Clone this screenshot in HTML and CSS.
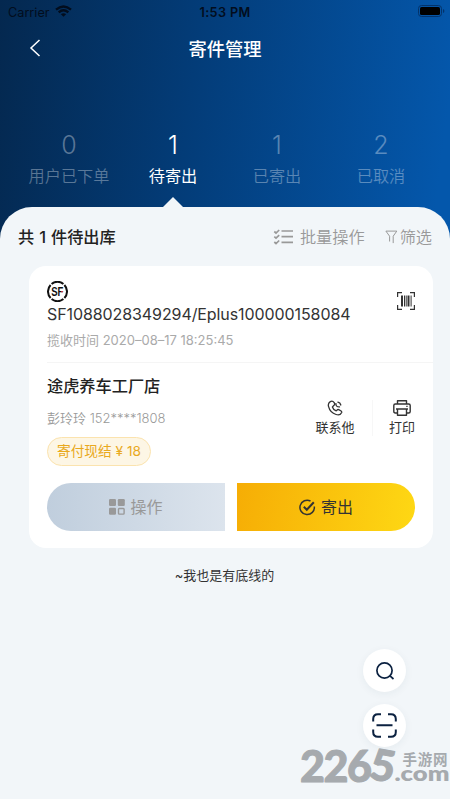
FILE: index.html
```html
<!DOCTYPE html>
<html lang="zh-CN">
<head>
<meta charset="utf-8">
<title>寄件管理</title>
<link rel="stylesheet" href="styles.css">
</head>
<body>
<div class="app">
  <div class="status">
    <div class="carrier"><span>Carrier</span>
      <svg width="17" height="12" viewBox="0 0 17 12" fill="none" stroke="#020d1d" stroke-width="2.4"><path d="M1 4.6Q8.5-1.8 16 4.6M3.7 7.3Q8.5 3.2 13.3 7.3"/><path d="M8.5 11.8 5.9 9.2Q8.5 7.2 11.1 9.2Z" fill="#020d1d" stroke="none"/></svg>
    </div>
    <span class="time">1:53 PM</span>
    <svg class="battery" width="27" height="12" viewBox="0 0 27 12"><rect x=".5" y=".5" width="23" height="11" rx="3" fill="none" stroke="#03336a"/><rect x="2" y="2" width="20" height="8" rx="1.6" fill="#000"/><path d="M25 4v4q1.4-.6 1.4-2T25 4z" fill="#03336a"/></svg>
  </div>
  <header class="nav">
    <svg class="back" width="12" height="18" viewBox="0 0 12 18" fill="none" stroke="#fff" stroke-width="1.5"><path d="M10.500 1 2 9l8.500 8"/></svg>
    <h1>寄件管理</h1>
  </header>
  <nav class="tabs">
    <div class="tab"><b>0</b><span>用户已下单</span></div>
    <div class="tab active"><b>1</b><span>待寄出</span></div>
    <div class="tab"><b>1</b><span>已寄出</span></div>
    <div class="tab"><b>2</b><span>已取消</span></div>
  </nav>
  <main class="sheet">
    <div class="toolbar">
      <h2>共 <i>1</i> 件待出库</h2>
      <div class="batch">
        <svg width="21" height="16" viewBox="0 0 21 16" fill="none" stroke="#999" stroke-width="1.700"><path d="M1.300 2.500 3 4 6.200 1M1.300 7.700 3 9.200l3.200-3M1.300 13 3 14.500l3.200-3M8.500 2h11.500M8.500 7.700H20M8.500 13.400H20"/></svg>
        <span>批量操作</span>
      </div>
      <div class="filter">
        <svg width="13" height="14" viewBox="0 0 13 14" fill="none" stroke="#999" stroke-width="1"><path d="M4.600 11.500V6.200L.9 1.100h10.900L8.200 6.200v6.900"/></svg>
        <span>筛选</span>
      </div>
    </div>
    <section class="card">
      <div class="waybill">
        <div class="ids">
          <svg class="sf" width="21" height="21" viewBox="0 0 21 21"><g fill="none" stroke="#111" stroke-width="2"><path d="M4.600 2.900A9.300 9.300 0 0 1 16.400 2.900M4.600 18.100A9.300 9.300 0 0 0 16.400 18.100M3.600 4A9.400 9.400 0 0 0 3.600 17M17.400 4A9.400 9.400 0 0 1 17.400 17"/></g><text x="4.200" y="14.800" textLength="12.200" lengthAdjust="spacingAndGlyphs">SF</text><path d="M14.200 10.600h1.800" stroke="#d33b4d" stroke-width="1.300"/></svg>
          <p class="number">SF1088028349294/Eplus100000158084</p>
          <p class="pickup">揽收时间 <span>2020–08–17 18:25:45</span></p>
        </div>
        <svg class="barcode" width="18" height="18" viewBox="0 0 18 18" fill="none" stroke="#333"><path stroke-width="1.200" d="M.6 5V.6H5M13 .6h4.400V5M.6 13v4.400H5M13 17.400h4.400V13"/><path stroke-width="2" d="M5 3.500v11M11.500 3.500v11"/><path d="M7.500 3.500v11M9.200 3.500v11M14.100 3.500v11"/></svg>
      </div>
      <div class="recipient">
        <div class="person">
          <h3>途虎养车工厂店</h3>
          <p>彭玲玲 <span>152****1808</span></p>
          <div class="pay">寄付现结 ¥ 18</div>
        </div>
        <div class="contact">
          <svg width="16" height="16" viewBox="0 0 16 16" fill="none" stroke="#333" stroke-width="1.300" stroke-linecap="round" stroke-linejoin="round"><path d="M3.300 1.600Q.7 3.200 1.500 6.400C2.400 10 5.300 13.400 9.100 14.500 11.700 15.300 13.800 14.500 14.700 12.500Q14.900 11.600 14.100 11L11.700 9.600Q10.800 9.200 10.100 10L9.200 10.900Q6.200 9.700 5.400 7L6.400 5.900Q8.400 4.600 7.200 2.600 5.500.2 3.300 1.600ZM9 3.600Q8.600 7 12.500 6.900M10.900 2.200Q13.200 2.700 13.800 5"/></svg>
          <span>联系他</span>
        </div>
        <div class="print">
          <svg width="18" height="16" viewBox="0 0 18 16" fill="none" stroke="#333" stroke-width="1.400" stroke-linejoin="round"><path d="M4.500 4V.8h9V4M4.500 13H2.300Q.8 13 .8 11.500v-6Q.8 4 2.300 4h13.400q1.500 0 1.500 1.500v6q0 1.500-1.500 1.500h-2.200"/><path d="M4.500 9h9v6.200h-9zM3 9h12M13.300 6.400h1.300"/></svg>
          <span>打印</span>
        </div>
      </div>
      <div class="actions">
        <button class="btn muted">
          <svg width="16" height="16" viewBox="0 0 16 16" fill="#999"><rect width="7" height="7" rx="1.200"/><rect x="8.800" width="7" height="7" rx="1.200"/><rect y="8.800" width="7" height="7" rx="1.200"/><rect x="9.500" y="9.500" width="5.600" height="5.600" rx=".8" fill="none" stroke="#999" stroke-width="1.400"/></svg>
          <span>操作</span>
        </button>
        <button class="btn send">
          <svg width="17" height="17" viewBox="0 0 17 17" fill="none" stroke="#333"><path stroke-width="1.500" d="M15.300 7.500A7.200 7.200 0 1 1 11.500 2"/><path stroke-width="2" d="m4.800 7.800 3 3 7-7.500"/></svg>
          <span>寄出</span>
        </button>
      </div>
    </section>
    <p class="end">~我也是有底线的</p>
  </main>
  <div class="fab search">
    <svg width="20" height="20" viewBox="0 0 20 20" fill="none" stroke="#0b2140" stroke-width="1.700"><circle cx="9.500" cy="9.500" r="7.600"/><path d="m14.700 14.700 3.800 3.300"/></svg>
  </div>
  <div class="fab scan">
    <svg width="25" height="25" viewBox="0 0 25 25" fill="none" stroke="#0b2140" stroke-width="2"><path d="M1.200 8.500V6q0-4.800 4.800-4.800h3M16 1.200h3q4.800 0 4.800 4.800v2.500M1.200 16.500V19q0 4.800 4.800 4.800h3M16 23.800h3q4.800 0 4.800-4.800v-2.500M4.500 12.300h16"/></svg>
  </div>
  <svg class="mark" width="150" height="50" viewBox="0 0 150 50" fill="#a6aaae"><text class="mark-num" x="0 23.500 47 68" y="36.500 36.500 36.500 33.500" rotate="0 0 0 10">2265</text><text class="mark-cn" x="102.500" y="19.500" textLength="45">手游网</text><text class="mark-com" x="94.500" y="36" textLength="55" lengthAdjust="spacingAndGlyphs">.com</text></svg>
</div>
</body>
</html>
```
FILE: styles.css
```css
* { box-sizing: border-box; margin: 0; padding: 0; }
body { font-family: Inter, "Noto Sans CJK SC", sans-serif; color: #333; }
svg { display: block; flex: none; }
.app { position: relative; width: 450px; height: 799px; overflow: hidden; display: flex; flex-direction: column; background: linear-gradient(97deg, #04284f 0, #033c78 42%, #0457ab 96%) 0 0 / 450px 250px no-repeat #f2f6f9; }

.status { height: 24px; display: grid; grid-template-columns: 1fr auto 1fr; align-items: center; padding: 0 5px 0 8px; color: #020d1d; font-size: 12.7px; }
.carrier { display: flex; align-items: center; gap: 5px; }
.carrier svg { margin-top: -2px; }
.time { font-weight: 600; letter-spacing: .35px; margin-right: 3px; }
.battery { justify-self: end; margin-top: -2px; }

.nav { height: 48px; display: grid; grid-template-columns: 1fr auto 1fr; align-items: center; padding: 0 28px; color: #fff; }
.back { margin-left: 1px; }
.nav h1 { grid-column: 2; font-size: 18.3px; line-height: 24px; font-weight: 500; margin-top: 2px; }

.tabs { height: 135px; padding: 57px 17px 0; display: grid; grid-template-columns: repeat(4, 104px); color: #fff; text-align: center; }
.tab { position: relative; display: flex; flex-direction: column; color: rgba(255, 255, 255, .34); }
.tab b { font: 300 25px/32px Inter, sans-serif; }
.tab span { font-size: 16.2px; line-height: 24px; margin-top: 3px; font-weight: 350; }
.tab.active { color: #fff; }
.tab.active span { font-weight: 400; }
.tab.active::after { content: ""; position: absolute; left: 42px; bottom: 0; border: 10px solid transparent; border-top: 0; border-bottom-color: #f2f6f9; }

.sheet { flex: 1; background: #f2f6f9; border-radius: 32px 32px 0 0; padding: 0 17px 0 29px; }
.toolbar { height: 59px; margin-left: -11px; display: flex; align-items: center; color: #999; font-size: 16.2px; line-height: 24px; font-weight: 350; }
.toolbar h2 { flex: 1; font: 500 16.2px/24px "Noto Sans CJK SC", sans-serif; word-spacing: 1.300px; color: #222; }
.toolbar h2 i { font: 500 16.500px/24px Inter, sans-serif; }
.toolbar h2 { margin-top: -1px; }
.batch, .filter { display: flex; align-items: center; }
.batch { gap: 6px; margin-right: 20px; }
.filter { gap: 2px; margin-right: 1px; }

.card { width: 404px; height: 282px; background: #fff; border-radius: 17px; padding: 15px 18px 0; }
.waybill { height: 81px; display: flex; justify-content: space-between; }
.sf text { font: 700 12px "Liberation Sans", sans-serif; fill: #111; }
.number { font-size: 16px; letter-spacing: -.09px; line-height: 22px; margin-top: 1px; white-space: nowrap; }
.pickup { font-size: 13px; line-height: 20px; margin-top: 5px; color: #aaa; }
.barcode { margin: 11px 0 0; }
.recipient { height: 121px; margin-right: -18px; padding-right: 18px; border-top: 1px solid #f5f5f5; display: flex; }
.person { flex: 1; }
.person h3 { font-size: 16.2px; line-height: 24px; font-weight: 500; margin-top: 11px; color: #222; }
.person p { font-size: 13px; line-height: 20px; margin-top: 10px; color: #999; font-weight: 350; }
.pay { width: 104px; height: 29px; margin-top: 9px; border: 1px solid #fbe3ae; border-radius: 15px; background: #fdf6e5; color: #e9a91e; font: 400 13.700px/27px Inter, "Noto Sans CJK SC", sans-serif; text-align: center; white-space: nowrap; }
.contact, .print { height: 36px; margin-top: 37px; display: flex; flex-direction: column; align-items: center; justify-content: space-between; font-size: 13px; line-height: 18px; white-space: nowrap; }
.contact { width: 57px; padding-right: 18px; border-right: 1px solid #f7f7f7; }
.print { width: 26px; margin-left: 16px; }
.actions { display: flex; gap: 12px; }
.btn { border: 0; height: 48px; display: flex; align-items: center; justify-content: center; gap: 5px; font: 400 16px/24px "Noto Sans CJK SC", sans-serif; color: #333; }
.btn span { margin-top: -2px; }
.muted { flex: 0 0 178px; color: #999; background: linear-gradient(90deg, #c0cedd, #dce4ed); border-radius: 24px 0 0 24px; }
.send { flex: 0 0 178px; background: linear-gradient(100deg, #f6ad05, #fed814); border-radius: 0 24px 24px 0; }
.end { width: 391px; margin-top: 17px; text-align: center; font-size: 13px; line-height: 20px; }

.fab { position: absolute; left: 363px; width: 43px; height: 43px; border-radius: 50%; background: #fff; display: flex; align-items: center; justify-content: center; box-shadow: 0 2px 8px rgba(30, 60, 90, .06); }
.search { top: 649px; }
.scan { top: 704px; }
.mark { position: absolute; left: 300px; top: 745px; overflow: visible; }
.mark-num { font: 900 43px Lato, sans-serif; stroke: #a6aaae; stroke-width: 1px; stroke-linejoin: round; }
.mark-cn { font: 700 14.500px "Noto Sans CJK SC", sans-serif; }
.mark-com { font: 800 20px Lato, sans-serif; }
```
